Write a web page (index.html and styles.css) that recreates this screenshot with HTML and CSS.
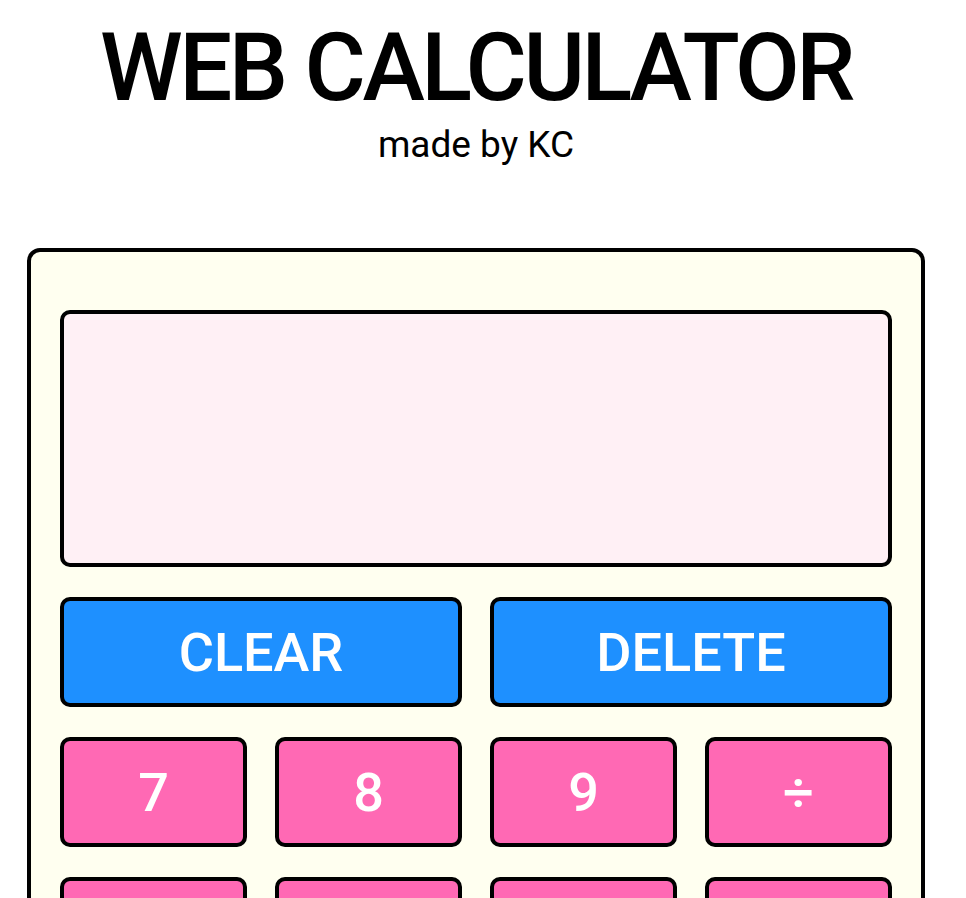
FILE: index.html
```html
<!DOCTYPE html>
<html lang="en">
<head>
<meta charset="utf-8">
<title>Web Calculator</title>
<link rel="stylesheet" href="styles.css">
</head>
<body>
<div class="page">
  <header class="header">
    <h1 class="title">WEB CALCULATOR</h1>
    <p class="subtitle">made by KC</p>
  </header>
  <main class="calculator">
    <div class="display"></div>
    <div class="keys">
      <button class="key key-wide key-action">CLEAR</button>
      <button class="key key-wide key-action">DELETE</button>
      <button class="key">7</button>
      <button class="key">8</button>
      <button class="key">9</button>
      <button class="key">÷</button>
      <button class="key">4</button>
      <button class="key">5</button>
      <button class="key">6</button>
      <button class="key">×</button>
      <button class="key">1</button>
      <button class="key">2</button>
      <button class="key">3</button>
      <button class="key">−</button>
      <button class="key">.</button>
      <button class="key">0</button>
      <button class="key">=</button>
      <button class="key">+</button>
    </div>
  </main>
</div>
</body>
</html>
```
FILE: styles.css
```css
* { box-sizing: border-box; }

body {
  margin: 0;
  background: #ffffff;
  font-family: Roboto, "Liberation Sans", sans-serif;
  color: #000;
}

.page {
  width: 952px;
  display: flex;
  flex-direction: column;
  align-items: center;
}

.header {
  display: flex;
  flex-direction: column;
  align-items: center;
}

.title {
  margin: 21px 0 0;
  font-size: 94px;
  font-weight: 500;
  letter-spacing: -3.5px;
  line-height: 1;
}

.subtitle {
  margin: 11px 0 0;
  font-size: 37px;
  line-height: 1;
}

.calculator {
  margin-top: 85px;
  width: 898px;
  padding: 58px 29px 40px;
  background: #fffff0;
  border: 4px solid #000;
  border-radius: 13px;
}

.display {
  height: 257px;
  background: #fff0f5;
  border: 4px solid #000;
  border-radius: 10px;
}

.keys {
  margin-top: 30px;
  display: grid;
  grid-template-columns: repeat(4, 1fr);
  grid-auto-rows: 110px;
  column-gap: 28px;
  row-gap: 30px;
}

.key {
  display: flex;
  align-items: center;
  justify-content: center;
  padding: 0;
  font-family: Roboto, "Liberation Sans", sans-serif;
  font-size: 54px;
  font-weight: 500;
  color: #fff;
  background: #ff69b4;
  border: 4px solid #000;
  border-radius: 10px;
}

.key-wide { grid-column: span 2; }

.key-action { background: #1e90ff; }
```
